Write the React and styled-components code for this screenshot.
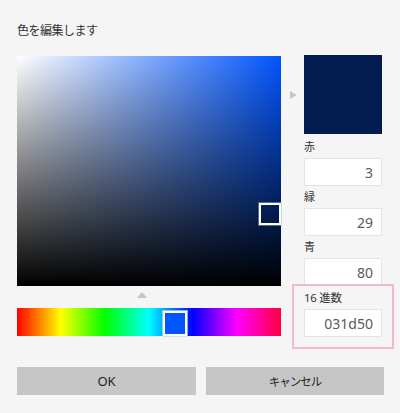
import styled, { createGlobalStyle } from 'styled-components';

const GlobalStyle = createGlobalStyle`
    body {
        margin: 0;
        background: #f5f5f5;
        font-family: "Noto Sans", "Noto Sans CJK JP", sans-serif;
        color: #333;
    }
`;

const Dialog = styled.div`
    width: 400px;
    height: 413px;
    box-sizing: border-box;
    padding: 20px 0 0 17px;
    background: #f5f5f5;
`;

const Title = styled.h1`
    margin: 0 0 15px;
    font-size: 12px;
    letter-spacing: -0.5px;
    font-weight: 400;
    line-height: 20px;
    color: #333;
    font-family: "Noto Sans CJK JP", sans-serif;
`;

const Main = styled.div`
    display: flex;
    align-items: flex-start;
`;

const PickerColumn = styled.div`
    display: flex;
    flex-direction: column;
    width: 264px;
`;

const SatValue = styled.div`
    position: relative;
    height: 230px;
    margin-top: 1px;
    background:
        linear-gradient(to top, #000, rgba(0, 0, 0, 0)),
        linear-gradient(to right, #fff, hsl(220, 100%, 50%));
`;

const Selector = styled.div`
    position: absolute;
    box-sizing: border-box;
    width: 22px;
    height: 22px;
    border: 2px solid #fff;
    transform: translate(-50%, -50%);
    box-shadow: 0 0 0 1px rgba(180, 180, 180, 0.5);
`;

const MarkerRow = styled.div`
    height: 22px;
    display: flex;
    align-items: center;
    padding-left: 120px;
`;

const UpArrow = styled.div`
    width: 0;
    height: 0;
    border-left: 5px solid transparent;
    border-right: 5px solid transparent;
    border-bottom: 6px solid #c4c4c4;
    margin-top: -4px;
`;

const HueBar = styled.div`
    position: relative;
    height: 28px;
    background: linear-gradient(to right, #ff0000, #ffff00 16.6%, #00ff00 33.3%, #00ffff 50%, #0000ff 66.6%, #ff00ff 83.3%, #ff0040);
`;

const HueThumb = styled.div`
    position: absolute;
    top: 3px;
    box-sizing: border-box;
    width: 24px;
    height: 25px;
    border: 2px solid #fff;
    transform: translateX(-50%);
    box-shadow: 0 0 0 1px rgba(200, 220, 230, 0.7);
`;

const ArrowColumn = styled.div`
    width: 23px;
    padding: 36px 0 0 9px;
    box-sizing: border-box;
`;

const RightArrow = styled.div`
    width: 0;
    height: 0;
    border-top: 4px solid transparent;
    border-bottom: 4px solid transparent;
    border-left: 7px solid #c8c8c8;
`;

const ValuesColumn = styled.div`
    display: flex;
    flex-direction: column;
    width: 78px;
`;

const Swatch = styled.div`
    height: 79px;
    background: ${p => p.color};
`;

const Label = styled.div`
    font-size: 11px;
    line-height: 16px;
    padding-top: ${p => p.$first ? 5 : 3}px;
    margin-bottom: 3px;
    color: #333;
    font-family: "Noto Sans", "Noto Sans CJK JP", sans-serif;
`;

const Field = styled.input`
    box-sizing: border-box;
    width: 78px;
    height: 28px;
    border: 1px solid #e4e4e4;
    background: #fff;
    text-align: right;
    padding: 0 8px;
    font-size: 14px;
    color: #5a5a5a;
    font-family: "Noto Sans", sans-serif;
    outline: none;
`;

const HexGroup = styled.div`
    margin: -2px -12px 0 -12px;
    padding: 4px 10px 10px;
    border: 2px solid #f4b7cd;
    width: 78px;
`;

const HexLabel = styled(Label)`
    padding-top: 0;
    font-size: 11.5px;
    letter-spacing: -0.3px;
`;

const Buttons = styled.div`
    display: grid;
    grid-template-columns: 179px 178px;
    gap: 10px;
    margin-top: 18px;
`;

const Button = styled.button`
    height: 28px;
    border: none;
    background: #c6c6c6;
    color: #222;
    font-size: ${p => p.$jp ? '11.5px' : '13px'};
    letter-spacing: ${p => p.$jp ? '-1px' : '0'};
    font-family: "Noto Sans", "Noto Sans CJK JP", sans-serif;
    padding: 0;
`;

const color = { r: 3, g: 29, b: 80 };
const hex = [color.r, color.g, color.b].map(v => v.toString(16).padStart(2, '0')).join('');
const sat = 0.96;
const val = color.b / 255;
const hue = 216 / 360;

const App = () => {
    return (
        <>
            <GlobalStyle />
            <Dialog>
                <Title>色を編集します</Title>
                <Main>
                    <PickerColumn>
                        <SatValue>
                            <Selector style={{ left: `${sat * 100}%`, top: `${(1 - val) * 100}%` }} />
                        </SatValue>
                        <MarkerRow><UpArrow /></MarkerRow>
                        <HueBar>
                            <HueThumb style={{ left: `${hue * 100}%`, background: 'hsl(220, 100%, 50%)' }} />
                        </HueBar>
                    </PickerColumn>
                    <ArrowColumn><RightArrow /></ArrowColumn>
                    <ValuesColumn>
                        <Swatch color={`#${hex}`} />
                        <Label $first>赤</Label>
                        <Field defaultValue={color.r} />
                        <Label>緑</Label>
                        <Field defaultValue={color.g} />
                        <Label>青</Label>
                        <Field defaultValue={color.b} />
                        <HexGroup>
                            <HexLabel>16 進数</HexLabel>
                            <Field defaultValue={hex} />
                        </HexGroup>
                    </ValuesColumn>
                </Main>
                <Buttons>
                    <Button>OK</Button>
                    <Button $jp>キャンセル</Button>
                </Buttons>
            </Dialog>
        </>
    );
}

export default App;
